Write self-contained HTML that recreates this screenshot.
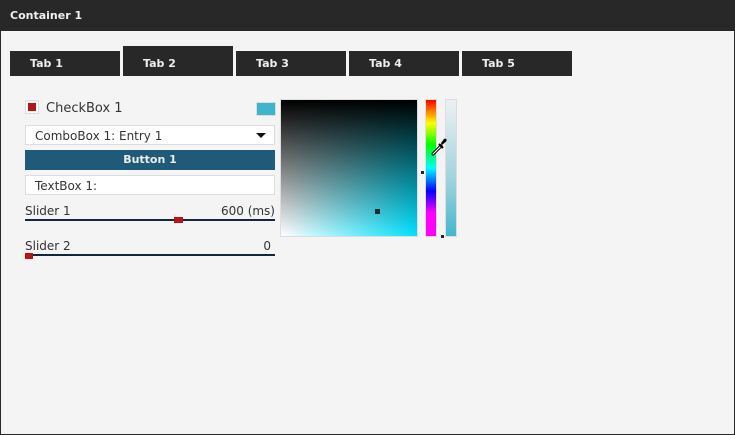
<!DOCTYPE html>
<html><head><meta charset="utf-8"><style>
*{margin:0;padding:0;box-sizing:border-box}
body{width:735px;height:435px;background:#f4f4f4;font-family:"DejaVu Sans","Liberation Sans",sans-serif;position:relative;overflow:hidden}
.frame{position:absolute;left:0;top:0;width:735px;height:435px;border:1px solid #282828}
.title{position:absolute;left:0;top:0;width:735px;height:31px;background:#282828;color:#f0f0f0;font-weight:bold;font-size:11px;padding:9px 0 0 10px}
.tab{position:absolute;top:51px;width:110px;height:25px;background:#282828;color:#eee;font-weight:bold;font-size:11px;padding:6px 0 0 20px}
.abs{position:absolute}
.box{position:absolute;background:#fff;border:1px solid #ddd;font-size:12px;color:#333}
.lbl{position:absolute;font-size:12px;color:#333}
</style></head><body>
<div class="frame"></div>
<div class="title">Container 1</div>
<div class="tab" style="left:10px">Tab 1</div>
<div class="tab" style="left:123px;top:46px;height:30px;padding-top:11px">Tab 2</div>
<div class="tab" style="left:236px">Tab 3</div>
<div class="tab" style="left:349px">Tab 4</div>
<div class="tab" style="left:462px">Tab 5</div>

<div class="box" style="left:25px;top:100px;width:14px;height:14px"></div>
<div class="abs" style="left:28px;top:103px;width:8px;height:8px;background:#b81414"></div>
<div class="lbl" style="left:46px;top:101px;font-size:13px">CheckBox 1</div>
<div class="abs" style="left:256px;top:102px;width:20px;height:14px;background:#3db6cc;border:1px solid #ddd"></div>

<div class="box" style="left:25px;top:125px;width:250px;height:20px;padding:3px 0 0 9px">ComboBox 1: Entry 1</div>
<div class="abs" style="left:256px;top:133px;width:0;height:0;border-left:5px solid transparent;border-right:5px solid transparent;border-top:5px solid #111"></div>

<div class="abs" style="left:25px;top:150px;width:250px;height:20px;background:#1f5a78;color:#eee;font-weight:bold;font-size:11px;text-align:center;padding-top:3px">Button 1</div>
<div class="box" style="left:25px;top:175px;width:250px;height:20px;padding:3px 0 0 9px">TextBox 1:</div>

<div class="lbl" style="left:25px;top:204px">Slider 1</div>
<div class="lbl" style="left:200px;top:204px;width:75px;text-align:right">600 (ms)</div>
<div class="abs" style="left:25px;top:219px;width:250px;height:2px;background:#13263a"></div>
<div class="abs" style="left:174px;top:217px;width:9px;height:6px;background:#b81414"></div>

<div class="lbl" style="left:25px;top:239px">Slider 2</div>
<div class="lbl" style="left:200px;top:239px;width:71px;text-align:right">0</div>
<div class="abs" style="left:25px;top:254px;width:250px;height:2px;background:#13263a"></div>
<div class="abs" style="left:25px;top:253px;width:8px;height:6px;background:#b81414"></div>

<div class="abs" style="left:280px;top:99px;width:138px;height:138px;border:1px solid #ddd;background:#fff"></div>
<div class="abs" style="left:281px;top:100px;width:136px;height:136px;background:linear-gradient(to top,rgba(0,0,0,0),#000),linear-gradient(to right,#fff,#00e1ff)"></div>
<div class="abs" style="left:375px;top:209px;width:5px;height:5px;background:#1b2a33"></div>

<div class="abs" style="left:425px;top:99px;width:12px;height:138px;border:1px solid #ddd;background:linear-gradient(to bottom,#f00,#ff0 17%,#0f0 33%,#0ff 50%,#00f 67%,#f0f 83%,#f0f)"></div>
<div class="abs" style="left:421px;top:171px;width:3px;height:3px;background:#222"></div>

<div class="abs" style="left:445px;top:99px;width:12px;height:138px;border:1px solid #ddd;background:linear-gradient(to bottom,#eef1f2,#9ed2de 60%,#45b6cd)"></div>
<div class="abs" style="left:441px;top:235px;width:3px;height:3px;background:#222"></div>

<svg class="abs" style="left:425px;top:133px" width="24" height="24" viewBox="0 0 24 24">
<path d="M8 21 L16 13" stroke="#000" stroke-width="3.2" stroke-linecap="round"/>
<path d="M8 21 L16 13" stroke="#fff" stroke-width="1.2" stroke-linecap="round"/>
<path d="M14 11 L18 15" stroke="#000" stroke-width="2"/>
<path d="M16 10 L19 6 Q21 5 21.5 6.5 Q22 8 20 9.5 L17 12 Z" fill="#000"/>
</svg>
</body></html>
